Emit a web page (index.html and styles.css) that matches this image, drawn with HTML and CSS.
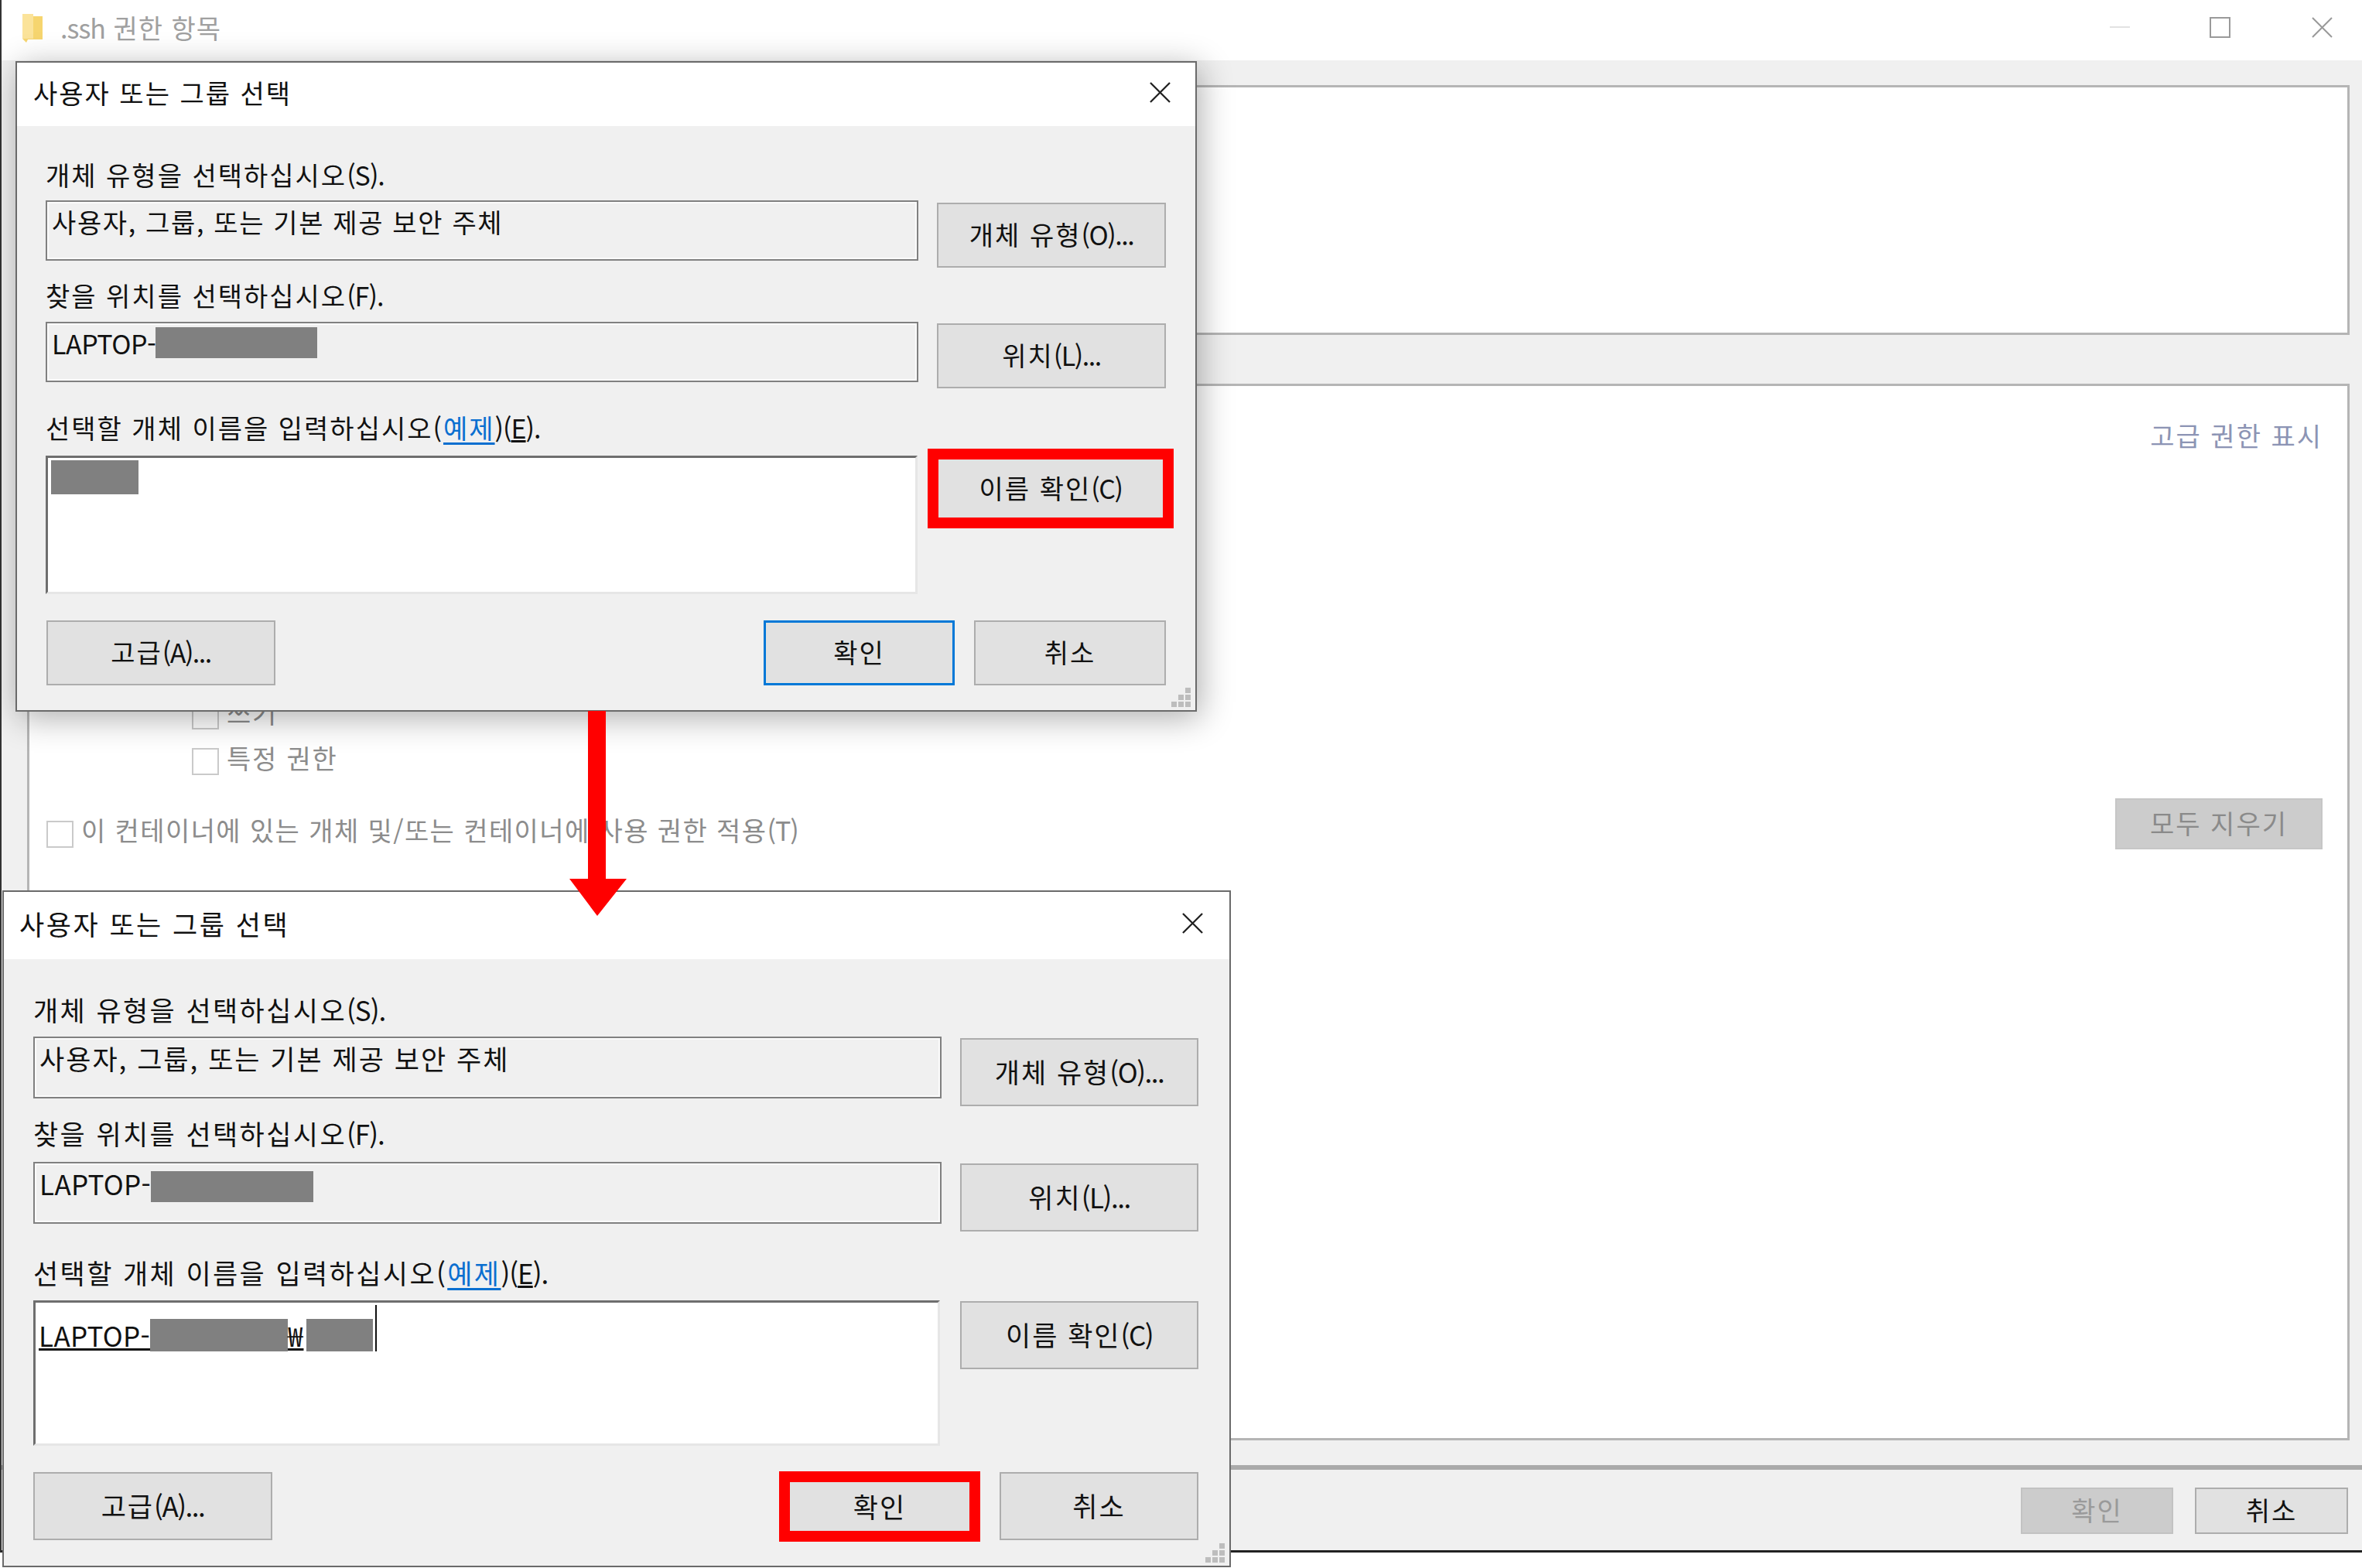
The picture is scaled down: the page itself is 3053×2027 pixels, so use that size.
FILE: index.html

```html
<!DOCTYPE html>
<html lang="ko">
<head>
    <meta charset="UTF-8">
    <title>.ssh 권한 항목</title>
    <link rel="stylesheet" href="styles.css">
</head>
<body>
    <div class="window">
        <div class="window-title">
            <svg class="folder" viewBox="0 0 26 38"><path d="M0 1 H12 L14 4 H26 V34 H7 L5 38 L0 33 Z" fill="#f6d56f"/><path d="M0 1 H14 V33 H0 Z" fill="#fbe39a"/></svg>
            <span class="window-name"><span class="lat">.ssh</span> 권한 항목</span>
            <svg class="win-min" viewBox="0 0 26 27"><path d="M0 13 H26" stroke="#e2e2e2" stroke-width="2"/></svg>
            <svg class="win-max" viewBox="0 0 27 27"><rect x="1" y="1" width="25" height="25" fill="none" stroke="#9a9a9a" stroke-width="2"/></svg>
            <svg class="win-close" viewBox="0 0 27 27"><path d="M1 1 L26 26 M26 1 L1 26" stroke="#999" stroke-width="2" fill="none"/></svg>
        </div>
        <div class="window-body">
            <div class="panel panel-owner"></div>
            <div class="panel panel-perms">
                <div class="adv-link">고급 권한 표시</div>
                <div class="perm-list">
                    <div class="perm"><span class="check"></span><span class="perm-text">쓰기</span></div>
                    <div class="perm"><span class="check"></span><span class="perm-text">특정 권한</span></div>
                </div>
                <div class="inherit-row">
                    <div class="inherit"><span class="check"></span><span class="inherit-text">이 컨테이너에 있는 개체 및/또는 컨테이너에 사용 권한 적용<span class="lat">(T)</span></span></div>
                    <button class="btn btn-clear" disabled>모두 지우기</button>
                </div>
            </div>
        </div>
        <div class="window-footer">
            <button class="btn btn-off" disabled>확인</button>
            <button class="btn btn-cancel">취소</button>
        </div>
    </div>

    <!-- first dialog -->
    <section class="dialog dialog-top">
        <header class="dialog-title">
            <span>사용자 또는 그룹 선택</span>
            <svg class="dialog-close" viewBox="0 0 28 28"><path d="M1 1 L27 27 M27 1 L1 27" stroke="#222" stroke-width="2.4" fill="none"/></svg>
        </header>
        <div class="dialog-body">
            <div class="group group-type">
                <p class="label">개체 유형을 선택하십시오<span class="lat">(S).</span></p>
                <div class="row">
                    <div class="field"><div class="value">사용자, 그룹, 또는 기본 제공 보안 주체</div></div>
                    <button class="btn btn-side">개체 유형<span class="lat">(O)...</span></button>
                </div>
            </div>
            <div class="group group-place">
                <p class="label">찾을 위치를 선택하십시오<span class="lat">(F).</span></p>
                <div class="row">
                    <div class="field"><div class="value"><span class="host">LAPTOP-</span><span class="redact redact-host"></span></div></div>
                    <button class="btn btn-side">위치<span class="lat">(L)...</span></button>
                </div>
            </div>
            <div class="group group-name">
                <p class="label">선택할 개체 이름을 입력하십시오(<a class="link">예제</a><span class="lat">)(<u>E</u>).</span></p>
                <div class="row">
                    <div class="input"><span class="redact redact-user"></span></div>
                    <button class="btn btn-side btn-marked">이름 확인<span class="lat">(C)</span></button>
                </div>
            </div>
            <div class="actions">
                <button class="btn btn-adv">고급<span class="lat">(A)...</span></button>
                <button class="btn btn-ok">확인</button>
                <button class="btn btn-no">취소</button>
            </div>
        </div>
        <svg class="grip" viewBox="0 0 26 26"><path d="M18 0h7v7h-7z M9 9h7v7H9z M18 9h7v7h-7z M0 18h7v7H0z M9 18h7v7H9z M18 18h7v7h-7z" fill="#bdbdbd"/></svg>
    </section>

    <!-- second dialog -->
    <section class="dialog dialog-bottom">
        <header class="dialog-title">
            <span>사용자 또는 그룹 선택</span>
            <svg class="dialog-close" viewBox="0 0 28 28"><path d="M1 1 L27 27 M27 1 L1 27" stroke="#222" stroke-width="2.4" fill="none"/></svg>
        </header>
        <div class="dialog-body">
            <div class="group group-type">
                <p class="label">개체 유형을 선택하십시오<span class="lat">(S).</span></p>
                <div class="row">
                    <div class="field"><div class="value">사용자, 그룹, 또는 기본 제공 보안 주체</div></div>
                    <button class="btn btn-side">개체 유형<span class="lat">(O)...</span></button>
                </div>
            </div>
            <div class="group group-place">
                <p class="label">찾을 위치를 선택하십시오<span class="lat">(F).</span></p>
                <div class="row">
                    <div class="field"><div class="value"><span class="host">LAPTOP-</span><span class="redact redact-host"></span></div></div>
                    <button class="btn btn-side">위치<span class="lat">(L)...</span></button>
                </div>
            </div>
            <div class="group group-name">
                <p class="label">선택할 개체 이름을 입력하십시오(<a class="link">예제</a><span class="lat">)(<u>E</u>).</span></p>
                <div class="row">
                    <div class="input">
                        <div class="entry"><u class="host">LAPTOP-</u><span class="redact redact-pc"></span><u class="won">₩</u><span class="redact redact-acct"></span><span class="caret"></span></div>
                    </div>
                    <button class="btn btn-side">이름 확인<span class="lat">(C)</span></button>
                </div>
            </div>
            <div class="actions">
                <button class="btn btn-adv">고급<span class="lat">(A)...</span></button>
                <button class="btn btn-ok btn-marked">확인</button>
                <button class="btn btn-no">취소</button>
            </div>
        </div>
        <svg class="grip" viewBox="0 0 26 26"><path d="M18 0h7v7h-7z M9 9h7v7H9z M18 9h7v7h-7z M0 18h7v7H0z M9 18h7v7H9z M18 18h7v7h-7z" fill="#bdbdbd"/></svg>
    </section>

    <svg class="arrow" viewBox="0 0 76 265"><path d="M26 0 H49 V217 H76 L38 265 L2 217 H26 Z" fill="#ff0000"/></svg>
</body>
</html>
```

FILE: styles.css

```css
* {
    box-sizing: border-box;
}
body {
    margin: 0;
    width: 3053px;
    height: 2027px;
    overflow: hidden;
    position: relative;
    background: #fff;
    font-family: "Noto Sans CJK KR", "Noto Sans", sans-serif;
    font-size: 34px;
    letter-spacing: 1px;
    color: #111;
}
p {
    margin: 0;
}
.lat {
    letter-spacing: -1px;
}
.host {
    letter-spacing: -0.5px;
}
.dialog-bottom .host {
    letter-spacing: 0.3px;
}

/* window in the back */
.window {
    height: 2007px;
    background: #f0f0f0;
    border-left: 2px solid #333;
    border-bottom: 3px solid #222;
}
.window-title {
    height: 78px;
    background: #fff;
    display: flex;
    align-items: center;
    padding: 0 38px 7px 27px;
    color: #a0a0a0;
}
.folder {
    width: 26px;
    height: 38px;
}
.window-name {
    margin-left: 23px;
}
.win-min {
    width: 26px;
    height: 27px;
    margin-left: auto;
}
.win-max {
    width: 27px;
    height: 27px;
    margin-left: 103px;
}
.win-close {
    width: 27px;
    height: 27px;
    margin-left: 105px;
}
.window-body {
    padding: 32px 16px 0 33px;
}
.panel {
    background: #fff;
    border: 3px solid #b5b5b5;
}
.panel-owner {
    height: 323px;
    margin-bottom: 63px;
}
.panel-perms {
    height: 1366px;
    color: #8c8c8c;
}
.adv-link {
    margin-top: 42px;
    padding-right: 32px;
    line-height: 44px;
    letter-spacing: 2px;
    text-align: right;
    color: #8c94b4;
}
.perm-list {
    margin-top: 323px;
    padding-left: 210px;
    display: flex;
    flex-direction: column;
    gap: 24px;
}
.perm {
    display: flex;
    align-items: center;
    height: 35px;
    gap: 10px;
}
.perm-text {
    margin-bottom: 10px;
    letter-spacing: 1.8px;
}
.check {
    width: 35px;
    height: 35px;
    flex: none;
    background: #fff;
    border: 2px solid #cacaca;
}
.inherit-row {
    margin-top: 30px;
    padding-left: 22px;
    padding-right: 32px;
    display: flex;
    justify-content: space-between;
    align-items: flex-start;
}
.inherit {
    display: flex;
    align-items: flex-start;
    gap: 10px;
}
.inherit .check {
    margin-top: 29px;
}
.inherit-text {
    margin-top: 19px;
    line-height: 44px;
    letter-spacing: 1.4px;
}
.window-footer {
    margin-top: 32px;
    border-top: 6px solid #aaa;
    display: flex;
    justify-content: flex-end;
    gap: 28px;
    padding: 23px 18px 0 0;
}

/* buttons */
.btn {
    font: inherit;
    letter-spacing: 2px;
    color: #111;
    background: #e1e1e1;
    border: 2px solid #adadad;
    padding: 0 0 3px;
    border-radius: 0;
    flex: none;
}
.btn .lat {
    letter-spacing: -1.5px;
}
.btn-clear {
    width: 268px;
    height: 66px;
    background: #cccccc;
    border-color: #c6c6c6;
    color: #8a8a8a;
}
.btn-off {
    width: 197px;
    height: 60px;
    background: #cccccc;
    border-color: #c2c2c2;
    color: #9a9a9a;
}
.btn-cancel {
    width: 198px;
    height: 60px;
}
.btn-marked {
    outline: 14px solid #ff0000;
    border: 0;
}

/* dialogs */
.dialog {
    position: absolute;
    background: #f0f0f0;
    border: 2px solid #6a6a6a;
}
.dialog-top {
    left: 20px;
    top: 79px;
    width: 1527px;
    height: 841px;
    box-shadow: 4px 8px 40px rgba(0, 0, 0, 0.32);
}
.dialog-bottom {
    left: 3px;
    top: 1151px;
    width: 1588px;
    height: 875px;
    font-size: 35px;
}
.dialog-title {
    display: flex;
    align-items: center;
    justify-content: space-between;
    background: #fff;
    padding: 0 32px 6px 21px;
    letter-spacing: 2px;
}
.dialog-top .dialog-title {
    height: 82px;
}
.dialog-bottom .dialog-title {
    height: 87px;
    padding: 0 34px 6px 20px;
    letter-spacing: 2.5px;
}
.dialog-close {
    width: 27px;
    height: 27px;
}
.dialog-body {
    padding: 0 38px 0 37px;
}
.dialog-bottom .dialog-body {
    padding: 0 40px 0 38px;
}
.label {
    line-height: 44px;
    letter-spacing: 2px;
}
.dialog-bottom .label {
    letter-spacing: 2.4px;
}
.link {
    color: #0a6fd0;
    text-decoration: underline;
    text-underline-offset: 5px;
}
.row {
    display: flex;
    align-items: flex-start;
}
.field {
    flex: 1;
    background: #f0f0f0;
    border: 2px solid #808080;
    box-shadow: inset 0 0 0 2px #fbfbfb;
    padding: 3px 0 0 6px;
    letter-spacing: 1.65px;
}
.dialog-bottom .field {
    letter-spacing: 2px;
}
.value {
    display: flex;
    align-items: center;
    height: 44px;
}
.input {
    flex: 1;
    background: #fff;
    border-style: solid;
    border-width: 3px;
    border-color: #6e6e6e #e6e6e6 #e6e6e6 #6e6e6e;
    margin-right: 4px;
    padding: 3px 0 0 4px;
}
.dialog-bottom .input {
    margin-right: 2px;
}
.btn-side {
    margin-left: 24px;
}
.redact {
    display: inline-block;
    background: #808080;
    flex: none;
}
.entry {
    display: flex;
    align-items: flex-end;
    height: 60px;
    line-height: 42px;
}
.caret {
    width: 2px;
    height: 60px;
    margin-left: 3px;
    background: #111;
}
.won {
    width: 24px;
}
.actions {
    display: flex;
    align-items: flex-start;
}
.btn-ok {
    margin-left: auto;
}
.grip {
    position: absolute;
    right: 5px;
    bottom: 3px;
    width: 26px;
    height: 26px;
}

/* top dialog sizes */
.dialog-top .group-type {
    margin-top: 41px;
}
.dialog-top .group-place {
    margin-top: 14px;
}
.dialog-top .group-name {
    margin-top: 29px;
}
.dialog-top .group-type .label {
    margin-bottom: 11px;
}
.dialog-top .group-place .label {
    margin-bottom: 12px;
}
.dialog-top .group-name .label {
    margin-bottom: 14px;
}
.dialog-top .field {
    height: 78px;
}
.dialog-top .btn-side {
    width: 296px;
    height: 84px;
}
.dialog-top .group-type .btn-side {
    margin-top: 3px;
}
.dialog-top .group-place .btn-side {
    margin-top: 2px;
}
.dialog-top .input {
    height: 179px;
}
.dialog-top .btn-side.btn-marked {
    width: 290px;
    height: 75px;
    margin-top: 5px;
    margin-left: 23px;
    margin-right: 4px;
}
.dialog-top .actions {
    margin-top: 34px;
    padding-left: 1px;
}
.dialog-top .btn-adv {
    width: 296px;
    height: 84px;
}
.dialog-top .btn-ok {
    width: 247px;
    height: 84px;
    border: 3px solid #0078d7;
}
.dialog-top .btn-no {
    width: 248px;
    height: 84px;
    margin-left: 25px;
}
.redact-host {
    width: 209px;
    height: 40px;
}
.redact-user {
    width: 113px;
    height: 44px;
}

/* bottom dialog sizes */
.dialog-bottom .group-type {
    margin-top: 43px;
}
.dialog-bottom .group-place {
    margin-top: 13px;
}
.dialog-bottom .group-name {
    margin-top: 31px;
}
.dialog-bottom .group-type .label {
    margin-bottom: 13px;
}
.dialog-bottom .group-place .label {
    margin-bottom: 15px;
}
.dialog-bottom .group-name .label {
    margin-bottom: 14px;
}
.dialog-bottom .field {
    height: 80px;
}
.dialog-bottom .btn-side {
    width: 308px;
    height: 88px;
    margin-top: 2px;
}
.dialog-bottom .group-place .btn-side {
    margin-top: 2px;
}
.dialog-bottom .input {
    height: 188px;
}
.dialog-bottom .group-name .btn-side {
    margin-top: 1px;
}
.dialog-bottom .actions {
    margin-top: 34px;
}
.dialog-bottom .btn-adv {
    width: 309px;
    height: 88px;
}
.dialog-bottom .btn-ok {
    width: 232px;
    height: 63px;
    margin-top: 13px;
}
.dialog-bottom .btn-no {
    width: 257px;
    height: 88px;
    margin-left: 39px;
}
.dialog-bottom .redact-host {
    margin-top: 10px;
    width: 210px;
}
.redact-pc {
    width: 178px;
    height: 42px;
}
.redact-acct {
    width: 86px;
    height: 42px;
}

.arrow {
    position: absolute;
    left: 734px;
    top: 919px;
    width: 76px;
    height: 265px;
}
```
